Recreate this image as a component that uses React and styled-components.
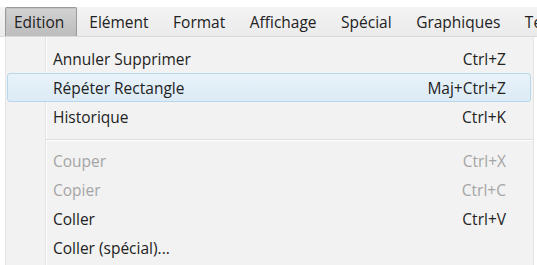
import React from 'react'
import styled, { createGlobalStyle } from 'styled-components'

const GlobalStyle = createGlobalStyle`
    html, body {
        margin: 0;
        padding: 0;
        background: #ffffff;
    }
    body {
        font-family: 'Open Sans', 'Noto Sans', sans-serif;
        width: 537px;
        height: 265px;
        overflow: hidden;
    }
`

const Window = styled.div`
    padding-top: 7px;
    width: 537px;
    height: 258px;
    display: flex;
    flex-direction: column;
`

const MenuBar = styled.div`
    display: flex;
    align-items: stretch;
    height: 30px;
    padding-left: 5px;
    background: linear-gradient(#f3f3f3, #ebebeb);
    border-bottom: 1px solid #dadada;
    box-sizing: border-box;
    overflow: hidden;
`

const BarItem = styled.div`
    display: flex;
    align-items: center;
    padding: 0 12.5px 0 12px;
    font-size: 15.5px;
    color: #222222;
    white-space: nowrap;
    box-sizing: border-box;
    ${(p) =>
        p.active
            ? `
        padding-left: 8px;
        padding-right: 12px;
        background: linear-gradient(#d2d2d2, #bcbcbc);
        border: 1px solid #9a9a9a;
        border-bottom: none;
        border-radius: 2px 2px 0 0;
        box-shadow: inset 1px 1px 0 #c4c4c4;
    `
            : ''}
`

const Dropdown = styled.div`
    flex: 1;
    margin: 0 3px 0 5px;
    background: #f2f2f2;
    border-left: 1px solid #e4e4e4;
    border-right: 1px solid #e4e4e4;
    display: flex;
    flex-direction: column;
    padding-top: 7px;
    position: relative;
`

const Gutter = styled.div`
    position: absolute;
    left: 39px;
    top: 0;
    bottom: 0;
    width: 1px;
    background: #e2e2e2;
    border-right: 1px solid #ffffff;
`

const Row = styled.div`
    display: flex;
    justify-content: space-between;
    align-items: center;
    height: 27px;
    margin: 0 2px 0 1px;
    padding: 0 24px 0 45px;
    font-size: 15.5px;
    color: ${(p) => (p.disabled ? '#a5a5a5' : '#222222')};
    border: 1px solid transparent;
    border-radius: 3px;
    position: relative;
    ${(p) =>
        p.selected
            ? `
        background: linear-gradient(#e8f2f9, #dcebf5);
        border-color: #b9d7ea;
    `
            : ''}
`

const Separator = styled.div`
    height: 1px;
    margin: 8px 0 5px 40px;
    background: #dedede;
    border-bottom: 1px solid #ffffff;
    position: relative;
`

const barItems = [
    { label: 'Edition', active: true },
    { label: 'Elément' },
    { label: 'Format' },
    { label: 'Affichage' },
    { label: 'Spécial' },
    { label: 'Graphiques' },
    { label: 'Texte' },
]

const groups = [
    [
        { label: 'Annuler Supprimer', key: 'Ctrl+Z' },
        { label: 'Répéter Rectangle', key: 'Maj+Ctrl+Z', selected: true },
        { label: 'Historique', key: 'Ctrl+K' },
    ],
    [
        { label: 'Couper', key: 'Ctrl+X', disabled: true },
        { label: 'Copier', key: 'Ctrl+C', disabled: true },
        { label: 'Coller', key: 'Ctrl+V' },
        { label: 'Coller (spécial)...', key: '' },
    ],
]

const App = () => {
    return (
        <>
            <GlobalStyle />
            <Window>
                <MenuBar>
                    {barItems.map((item) => (
                        <BarItem key={item.label} active={item.active}>
                            {item.label}
                        </BarItem>
                    ))}
                </MenuBar>
                <Dropdown>
                    <Gutter />
                    {groups.map((group, i) => (
                        <React.Fragment key={i}>
                            {i > 0 && <Separator />}
                            {group.map((row) => (
                                <Row
                                    key={row.label}
                                    selected={row.selected}
                                    disabled={row.disabled}
                                >
                                    <span>{row.label}</span>
                                    <span>{row.key}</span>
                                </Row>
                            ))}
                        </React.Fragment>
                    ))}
                </Dropdown>
            </Window>
        </>
    )
}

export default App
